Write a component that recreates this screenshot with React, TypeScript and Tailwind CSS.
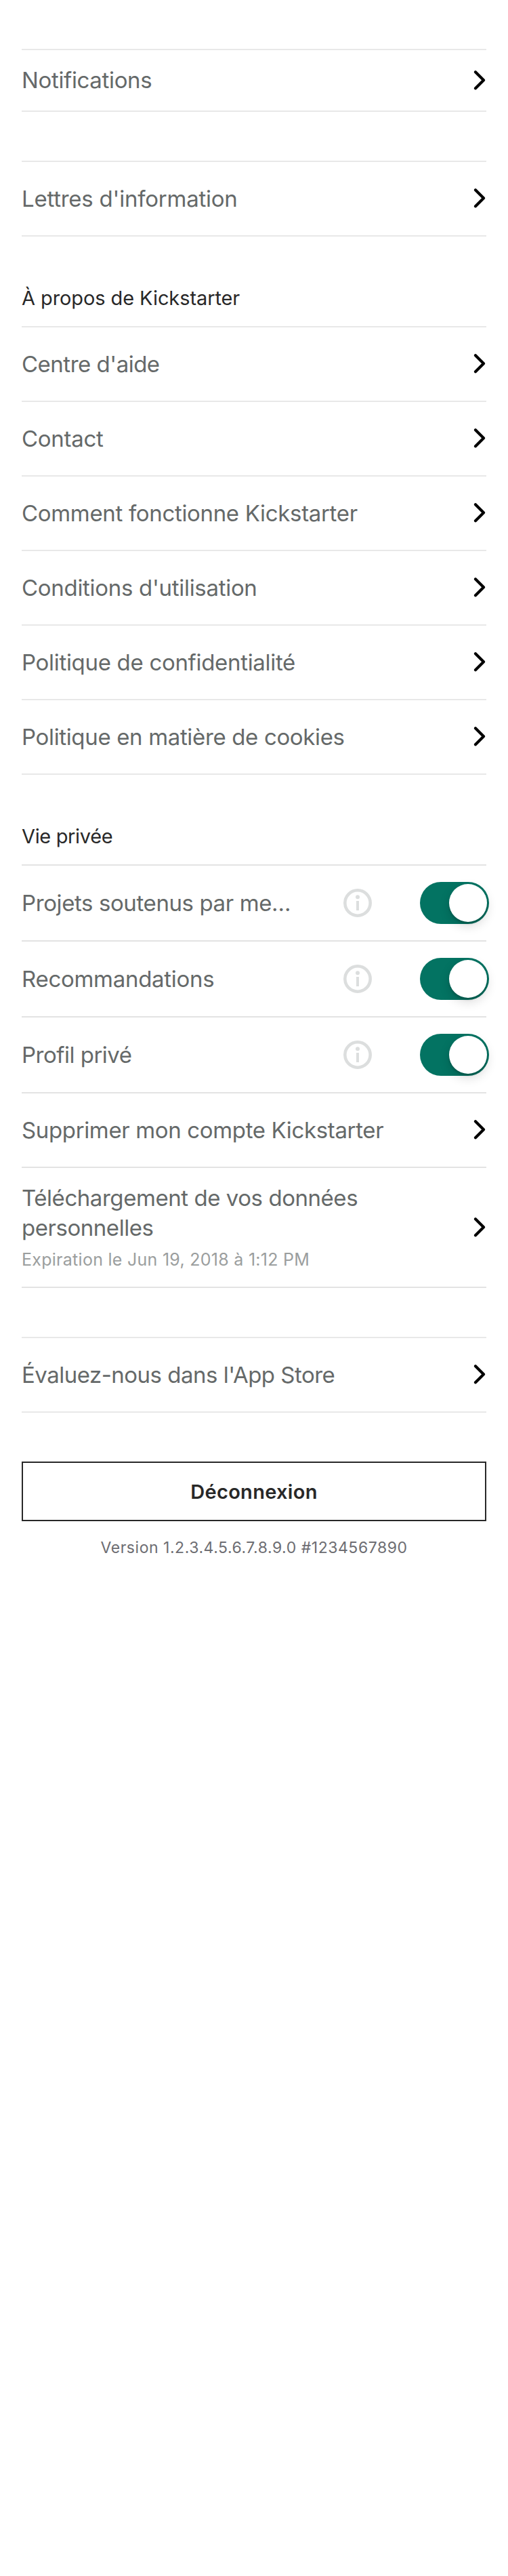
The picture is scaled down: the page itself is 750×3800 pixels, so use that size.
import type { ReactNode } from "react";

type Item = { label: string; tracking: string };

const helpItems: Item[] = [
  { label: "Centre d'aide", tracking: "tracking-[-0.5px]" },
  { label: "Contact", tracking: "tracking-[-0.3px]" },
  { label: "Comment fonctionne Kickstarter", tracking: "tracking-[-0.33px]" },
  { label: "Conditions d'utilisation", tracking: "tracking-[-0.3px]" },
  { label: "Politique de confidentialité", tracking: "tracking-[-0.31px]" },
  { label: "Politique en matière de cookies", tracking: "tracking-[-0.35px]" },
];

const privacyItems: Item[] = [
  { label: "Projets soutenus par me…", tracking: "tracking-[-0.4px]" },
  { label: "Recommandations", tracking: "tracking-[-0.29px]" },
  { label: "Profil privé", tracking: "tracking-[-0.5px]" },
];

function Chevron() {
  return (
    <svg width="20" height="30" viewBox="0 0 20 30" className="shrink-0" fill="none" aria-hidden="true">
      <path
        d="M4 2.3 16 14.3 4 26.3"
        stroke="#000"
        strokeWidth="4.2"
        strokeLinecap="round"
        strokeLinejoin="round"
      />
    </svg>
  );
}

function InfoIcon() {
  return (
    <svg width="42" height="42" viewBox="0 0 42 42" className="shrink-0" fill="none" aria-hidden="true">
      <circle cx="21" cy="21" r="18.7" stroke="#dcdede" strokeWidth="4.6" />
      <circle cx="21" cy="12.3" r="3" fill="#dcdede" />
      <rect x="19" y="18" width="4" height="14" fill="#dcdede" />
    </svg>
  );
}

function Toggle() {
  return (
    <button
      type="button"
      role="switch"
      aria-checked="true"
      className="-mr-1 flex h-[62px] w-[102px] shrink-0 items-center justify-end rounded-full bg-[#037362] pr-[3px]"
    >
      <span className="size-14 rounded-full bg-white shadow-[0_6px_16px_rgba(0,0,0,0.15),0_3px_3px_rgba(0,0,0,0.14)]" />
    </button>
  );
}

function Label({ label, tracking }: Item) {
  return (
    <span className={`whitespace-nowrap text-[33px] leading-10 text-[#656969] ${tracking}`}>{label}</span>
  );
}

function LinkRow({ label, tracking, line = "border-[#e8e8e8]" }: Item & { line?: string }) {
  return (
    <div className={`flex h-[110px] items-center justify-between border-b-2 ${line}`}>
      <Label label={label} tracking={tracking} />
      <Chevron />
    </div>
  );
}

function ToggleRow({ label, tracking }: Item) {
  return (
    <div className="flex h-28 items-center border-b-2 border-[#e3e3e3]">
      <div className="w-[475px]">
        <Label label={label} tracking={tracking} />
      </div>
      <InfoIcon />
      <div className="ml-auto">
        <Toggle />
      </div>
    </div>
  );
}

function Heading({ children, className }: { children: ReactNode; className: string }) {
  return (
    <h2 className={`flex h-[134px] items-end border-b-2 pb-6 text-[29px] leading-[35px] text-[#282828] ${className}`}>
      {children}
    </h2>
  );
}

export default function App() {
  return (
    <main className="min-h-[3800px] w-[750px] bg-white px-8 pt-[72px] font-['Inter',sans-serif]">
      <section className="flex h-[93px] items-center justify-between border-y-2 border-[#e8e8e8]">
        <span className="mb-px whitespace-nowrap text-[33px] leading-10 tracking-[-0.35px] text-[#656969]">
          Notifications
        </span>
        <Chevron />
      </section>

      <section className="mt-[72px] border-t-2 border-[#e8e8e8]">
        <LinkRow label="Lettres d'information" tracking="tracking-[-0.24px]" />
      </section>

      <section>
        <Heading className="border-[#e8e8e8] tracking-[-0.09px]">À propos de Kickstarter</Heading>
        {helpItems.map((item) => (
          <LinkRow key={item.label} {...item} />
        ))}
      </section>

      <section>
        <Heading className="border-[#e3e3e3] tracking-[-0.35px]">Vie privée</Heading>
        {privacyItems.map((item) => (
          <ToggleRow key={item.label} {...item} />
        ))}
        <LinkRow
          label="Supprimer mon compte Kickstarter"
          tracking="tracking-[-0.36px]"
          line="border-[#e3e3e3]"
        />
        <div className="flex h-[177px] items-center justify-between border-b-2 border-[#e3e3e3]">
          <div className="flex flex-col self-start pt-[22px]">
            <p className="text-[33px] leading-[44px] text-[#656969]">
              <span className="block tracking-[-0.45px]">Téléchargement de vos données</span>
              <span className="block tracking-[-0.46px]">personnelles</span>
            </p>
            <p className="mt-2.5 text-[25px] leading-[30px] tracking-[0.27px] text-[#9b9e9e]">
              Expiration le Jun 19, 2018 à 1:12 PM
            </p>
          </div>
          <Chevron />
        </div>
      </section>

      <section className="mt-[72px] border-t-2 border-[#e8e8e8]">
        <LinkRow label="Évaluez-nous dans l'App Store" tracking="tracking-[-0.51px]" />
      </section>

      <button
        type="button"
        className="mt-[72px] flex h-[88px] w-full items-center justify-center border-2 border-[#282828] pt-px text-[29px] font-semibold leading-[35px] tracking-[0.3px] text-[#282828]"
      >
        Déconnexion
      </button>
      <p className="mt-[25px] text-center text-[23px] leading-7 tracking-[0.53px] text-[#6d6d72]">
        Version 1.2.3.4.5.6.7.8.9.0 #1234567890
      </p>
    </main>
  );
}
